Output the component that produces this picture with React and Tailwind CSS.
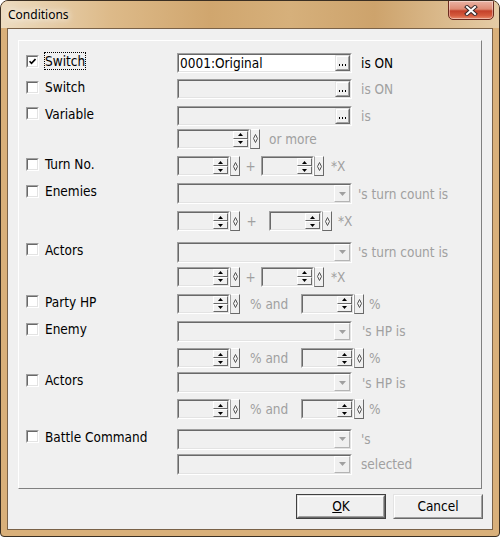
import React from 'react';

const F = "font-['DejaVu_Sans_Condensed','DejaVu_Sans',sans-serif] text-[13.5px]";

function Sunken({ className = '', bg = 'bg-[#f0f0f0]', children }) {
  return (
    <div className={`border border-t-[#a0a0a0] border-l-[#a0a0a0] border-r-white border-b-white ${className}`}>
      <div className={`flex h-full w-full border border-t-[#696969] border-l-[#696969] border-r-[#e3e3e3] border-b-[#e3e3e3] ${bg}`}>
        {children}
      </div>
    </div>
  );
}

function Raised({ className = '', children }) {
  return (
    <div className={`border border-t-[#e3e3e3] border-l-[#e3e3e3] border-r-[#696969] border-b-[#696969] ${className}`}>
      <div className="flex h-full w-full items-center justify-center border border-t-white border-l-white border-r-[#a0a0a0] border-b-[#a0a0a0] bg-[#f0f0f0]">
        {children}
      </div>
    </div>
  );
}

function SpinBtn({ up }) {
  return (
    <div className="flex h-[8px] w-[15px] items-center justify-center border border-t-white border-l-white border-r-[#696969] border-b-[#696969] bg-[#f0f0f0]">
      <svg width="5" height="3" viewBox="0 0 5 3">
        {up ? <polygon points="2.5,0 5,3 0,3" fill="#000" /> : <polygon points="0,0 5,0 2.5,3" fill="#000" />}
      </svg>
    </div>
  );
}

function Spin({ wide }) {
  return (
    <div className="flex h-[20px]">
      <Sunken className={wide ? 'h-[20px] w-[73px]' : 'h-[20px] w-[53px]'}>
        <div className="flex-1" />
        <div className="flex w-[15px] flex-col">
          <SpinBtn up />
          <SpinBtn />
        </div>
      </Sunken>
      <div className="flex h-[20px] w-[10px] items-center justify-center border border-t-white border-l-[#a0a0a0] border-r-[#696969] border-b-[#696969] bg-[#f0f0f0]">
        <svg width="5" height="9" viewBox="0 0 5 9">
          <path d="M2.5 0.5 L4.5 4.5 L2.5 8.5 L0.5 4.5 Z" fill="none" stroke="#555" strokeWidth="1" />
        </svg>
      </div>
    </div>
  );
}

function Edit({ enabled, text }) {
  return (
    <Sunken className="h-[20px] w-[175px]" bg={enabled ? 'bg-white' : 'bg-[#f0f0f0]'}>
      <div className="flex-1 pl-[1px] leading-[16px] text-black">{text}</div>
      <Raised className="h-[16px] w-[15px]">
        <svg width="7" height="2" viewBox="0 0 7 2" className="mt-[4px]">
          <rect x="0" y="0" width="1" height="2" fill="#000" />
          <rect x="3" y="0" width="1" height="2" fill="#000" />
          <rect x="6" y="0" width="1" height="2" fill="#000" />
        </svg>
      </Raised>
    </Sunken>
  );
}

function Combo() {
  return (
    <Sunken className="h-[21px] w-[175px]">
      <div className="flex-1" />
      <div className="flex h-full w-[16px] items-center justify-center border border-t-white border-l-white border-r-[#b4b4b4] border-b-[#b4b4b4] bg-[#f0f0f0]">
        <svg width="7" height="4" viewBox="0 0 7 4">
          <polygon points="0,0 7,0 3.5,4" fill="#a0a0a0" />
        </svg>
      </div>
    </Sunken>
  );
}

function CheckBox({ checked }) {
  return (
    <Sunken className="h-[13px] w-[13px]" bg="bg-white">
      {checked && (
        <div className="flex h-full w-full items-center justify-center">
          <svg width="7" height="7" viewBox="0 0 7 7">
            <path d="M0.5 3.2 L2.5 5.3 L6.5 1" fill="none" stroke="#000" strokeWidth="1.6" />
          </svg>
        </div>
      )}
    </Sunken>
  );
}

function Row({ mt, label, checked, focus, children }) {
  return (
    <div className={`flex items-start ${mt}`}>
      <div className="flex h-[20px] w-[158px] items-center pb-[4px] pl-[7px]">
        {label && (
          <>
            <CheckBox checked={checked} />
            <span
              className={`ml-[5px] whitespace-nowrap border border-dotted leading-[16px] text-black ${focus ? 'border-black' : 'border-transparent'}`}
            >
              {label}
            </span>
          </>
        )}
      </div>
      <div className="flex items-center">{children}</div>
    </div>
  );
}

const G = 'text-[#a0a0a0] whitespace-nowrap';

export default function App() {
  return (
    <div className={`h-[537px] w-[500px] overflow-hidden rounded-t-[8px] rounded-b-[4px] border border-[#3b2f22] bg-[#d9b07a] ${F}`}>
      <div className="flex h-[27px] items-start justify-between bg-[linear-gradient(90deg,#eddcc0_0%,#ddba89_22%,#d0a66e_42%,#d6b07b_58%,#cda36c_75%,#e5cca6_100%)]">
        <span className="ml-[7px] mt-[6px] font-['Noto_Sans',sans-serif] text-[12px] leading-[16px] text-black [text-shadow:0_0_6px_#fff,0_0_10px_#fff]">
          Conditions
        </span>
        <div className="mr-[5px] -mt-[1px] flex h-[20px] w-[46px] items-center justify-center rounded-b-[5px] border border-[#6b2a1e] bg-[linear-gradient(180deg,#eab3a4_0%,#de8b74_45%,#c4412a_55%,#d4593c_80%,#e88a6a_100%)] shadow-[inset_0_0_0_1px_rgba(255,255,255,0.4)]">
          <svg width="14" height="11" viewBox="0 0 14 11">
            <path d="M3 2 L11 9 M11 2 L3 9" stroke="#3a2a2a" strokeWidth="4" strokeLinecap="square" />
            <path d="M3 2 L11 9 M11 2 L3 9" stroke="#fff" strokeWidth="2" strokeLinecap="square" />
          </svg>
        </div>
      </div>

      <div className="mx-[6px] h-[502px] border border-[#7a6248] bg-[#f0f0f0]">
        <div className="ml-[10px] mt-[11px] h-[449px] w-[464px] border border-t-white border-l-white border-r-[#808080] border-b-[#808080]">
          <div className="flex flex-col">
            <Row mt="mt-[12px]" label="Switch" checked focus>
              <Edit enabled text="0001:Original" />
              <span className="ml-[9px] text-black">is ON</span>
            </Row>
            <Row mt="mt-1.5" label="Switch">
              <Edit />
              <span className={`ml-[9px] ${G}`}>is ON</span>
            </Row>
            <Row mt="mt-1.5" label="Variable">
              <Edit />
              <span className={`ml-[9px] ${G}`}>is</span>
            </Row>
            <Row mt="mt-[3px]">
              <Spin wide />
              <span className={`ml-[9px] ${G}`}>or more</span>
            </Row>
            <Row mt="mt-[7px]" label="Turn No.">
              <Spin />
              <span className={`w-[21px] text-center ${G}`}>+</span>
              <Spin />
              <span className={`ml-[7px] ${G}`}>*X</span>
            </Row>
            <Row mt="mt-[7px]" label="Enemies">
              <Combo />
              <span className={`ml-[6px] ${G}`}>'s turn count is</span>
            </Row>
            <Row mt="mt-[7px]">
              <Spin />
              <span className={`w-[23px] text-center ${G}`}>+</span>
              <div className="ml-[6px]">
                <Spin />
              </div>
              <span className={`ml-[6px] ${G}`}>*X</span>
            </Row>
            <Row mt="mt-2.5" label="Actors">
              <Combo />
              <span className={`ml-[6px] ${G}`}>'s turn count is</span>
            </Row>
            <Row mt="mt-1">
              <Spin />
              <span className={`w-[21px] text-center ${G}`}>+</span>
              <Spin />
              <span className={`ml-[7px] ${G}`}>*X</span>
            </Row>
            <Row mt="mt-[7px]" label="Party HP">
              <Spin />
              <span className={`w-[61px] pl-[10px] ${G}`}>% and</span>
              <Spin />
              <span className={`ml-[5px] ${G}`}>%</span>
            </Row>
            <Row mt="mt-[7px]" label="Enemy">
              <Combo />
              <span className={`ml-[10px] ${G}`}>'s HP is</span>
            </Row>
            <Row mt="mt-1.5">
              <Spin />
              <span className={`w-[61px] pl-[10px] ${G}`}>% and</span>
              <Spin />
              <span className={`ml-[5px] ${G}`}>%</span>
            </Row>
            <Row mt="mt-1" label="Actors">
              <Combo />
              <span className={`ml-[10px] ${G}`}>'s HP is</span>
            </Row>
            <Row mt="mt-1.5">
              <Spin />
              <span className={`w-[61px] pl-[10px] ${G}`}>% and</span>
              <Spin />
              <span className={`ml-[5px] ${G}`}>%</span>
            </Row>
            <Row mt="mt-[9px]" label="Battle Command">
              <Combo />
              <span className={`ml-[9px] ${G}`}>'s</span>
            </Row>
            <Row mt="mt-1">
              <Combo />
              <span className={`ml-[9px] ${G}`}>selected</span>
            </Row>
          </div>
        </div>

        <div className="mt-[5px] flex justify-end gap-[7px] pr-[9px]">
          <div className="h-[25px] w-[90px] border border-[#404040]">
            <Raised className="h-full w-full">
              <span className="text-black">
                <span className="underline">O</span>K
              </span>
            </Raised>
          </div>
          <Raised className="h-[25px] w-[90px]">
            <span className="text-black">Cancel</span>
          </Raised>
        </div>
      </div>
    </div>
  );
}
